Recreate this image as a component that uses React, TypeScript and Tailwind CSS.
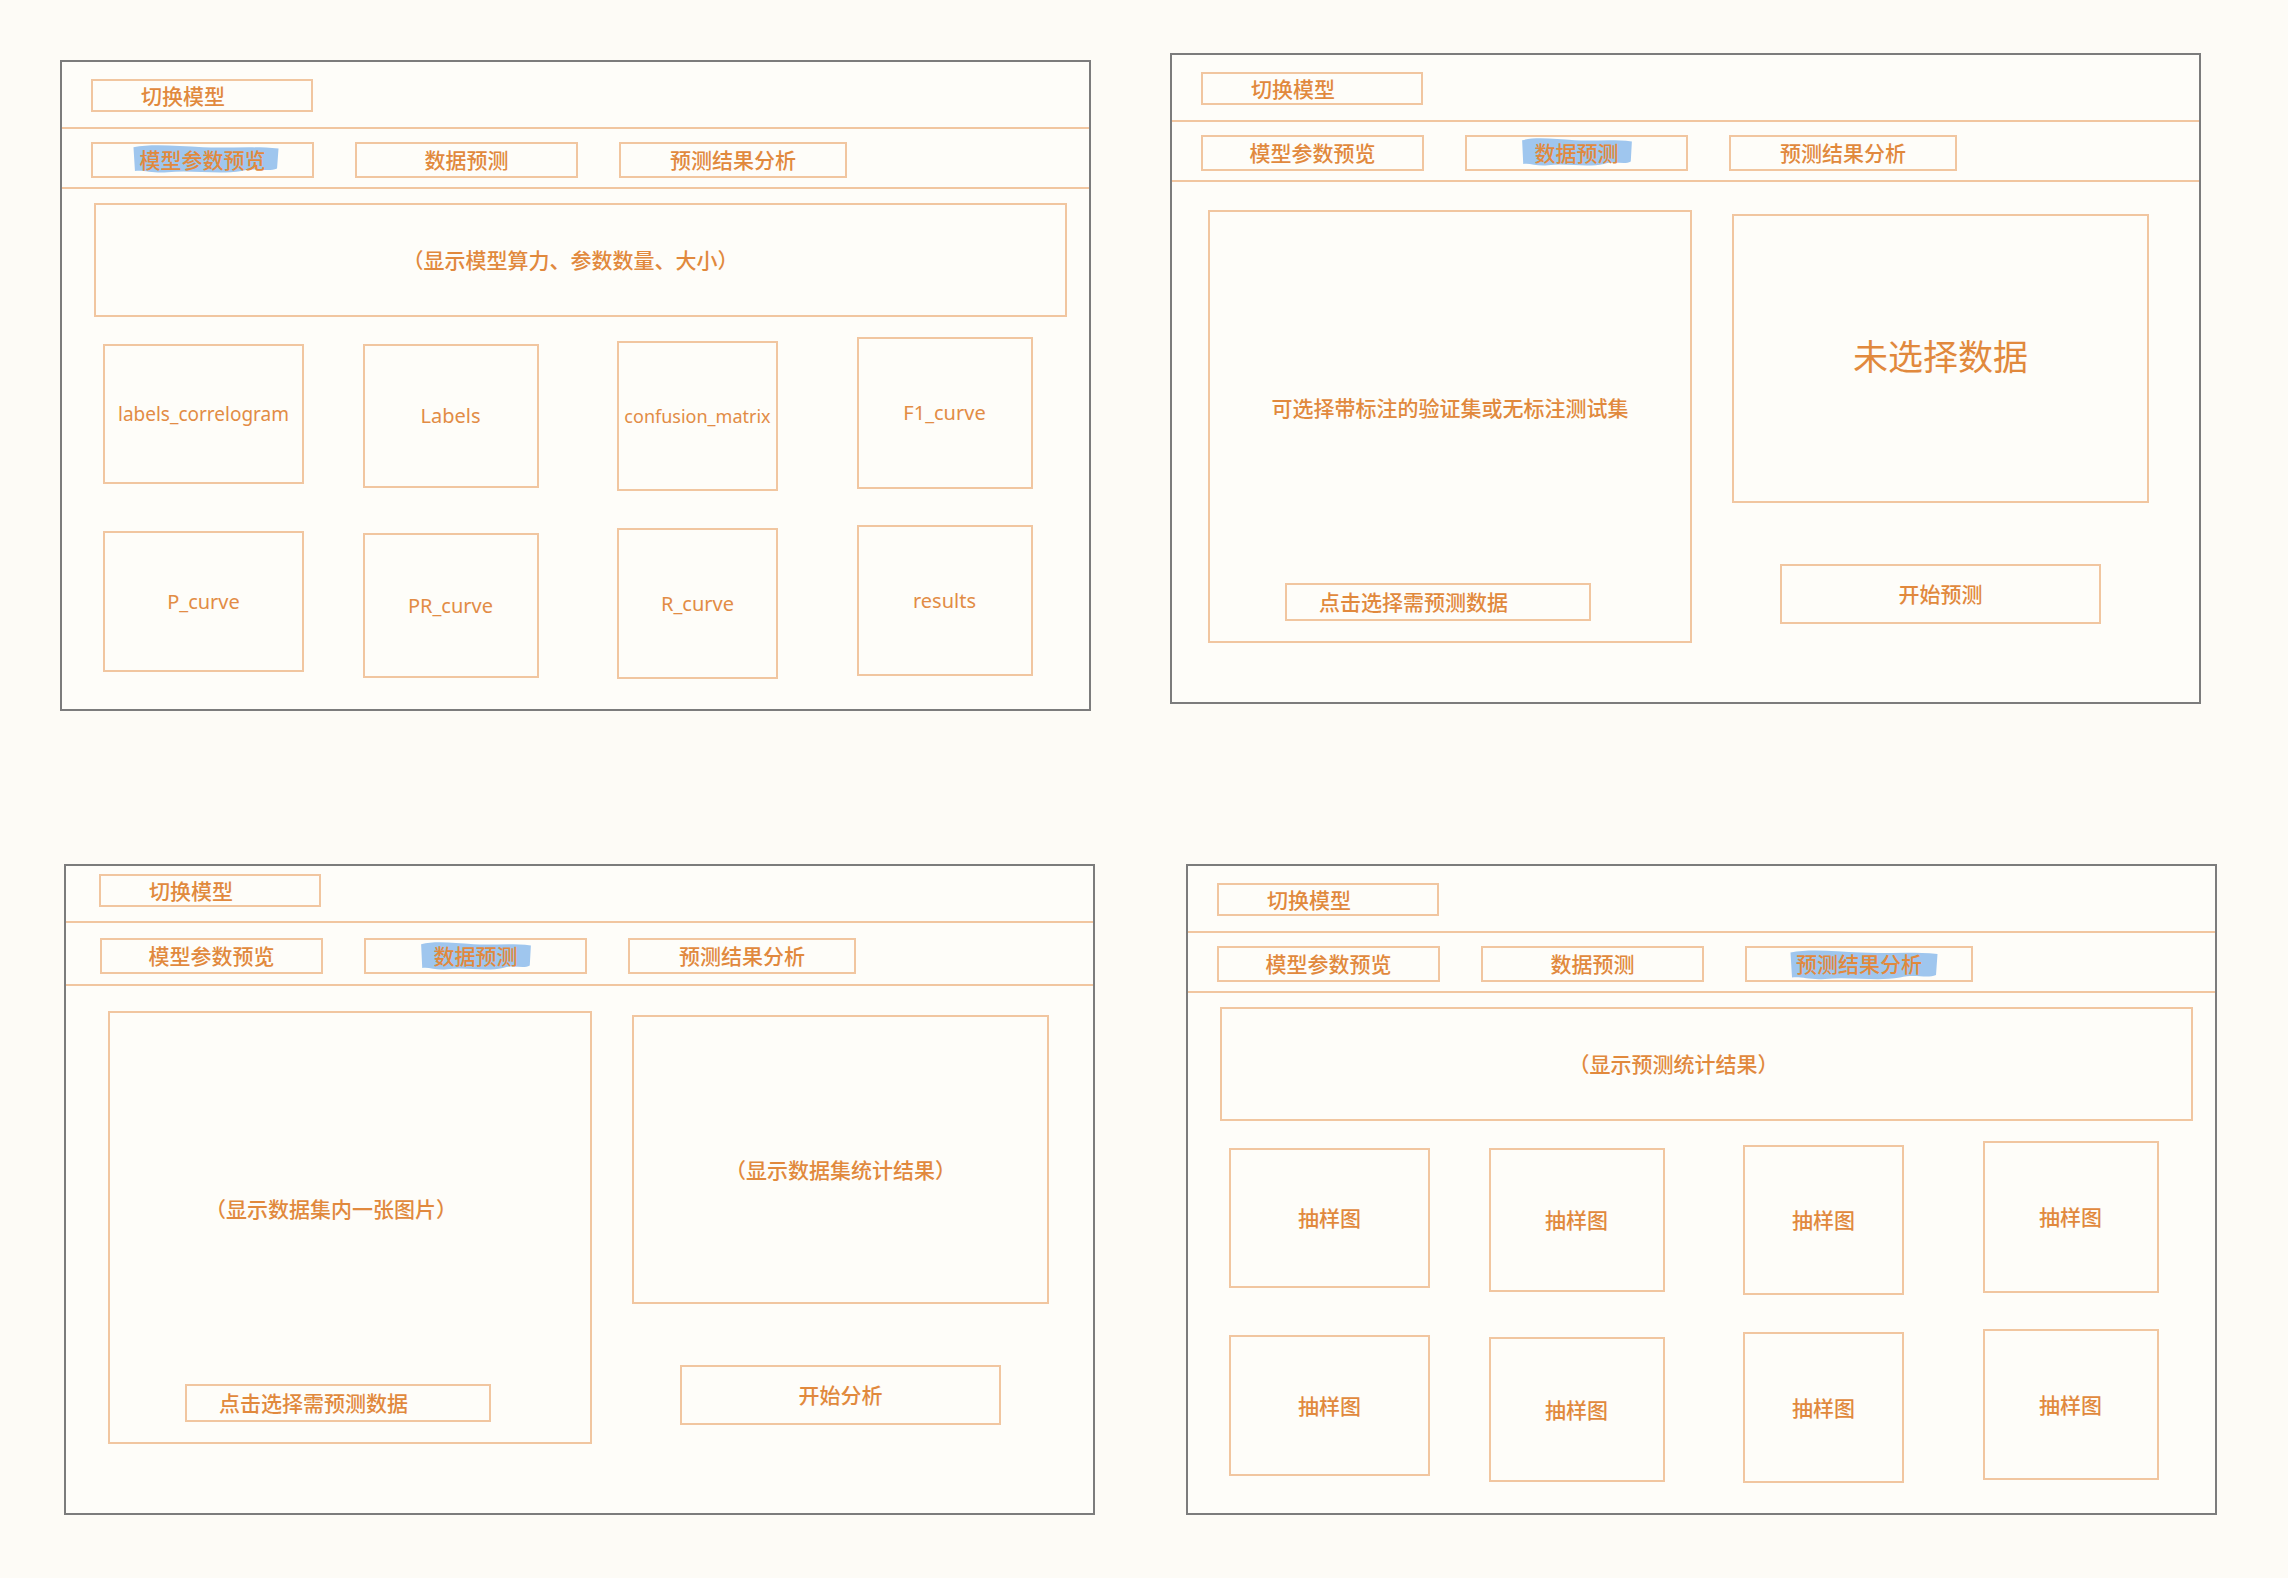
import React from 'react';

const CJK = "font-['Noto_Sans_CJK_SC',sans-serif]";
const LINE = 'border-2 border-[#f1c6a0]';
const INK = 'text-[#e1893d]';

type MarkProps = { children: React.ReactNode; svgClass: string };

// hand-drawn blue highlighter stroke behind the active tab label
const Mark: React.FC<MarkProps> = ({ children, svgClass }) => (
  <span className="relative inline-block">
    <svg
      className={`absolute ${svgClass}`}
      viewBox="0 0 100 30"
      preserveAspectRatio="none"
    >
      <path
        d="M1 5 C14 2 30 4 48 5 C64 6 80 4 99 6 L98 22 C92 25 84 21 74 24 C58 27 40 23 24 25 C14 26 8 23 2 24 Z"
        fill="#9fc6ee"
      />
    </svg>
    <span className="relative">{children}</span>
  </span>
);

const tabs = ['模型参数预览', '数据预测', '预测结果分析'];
const tabWidths = ['w-[223px]', 'w-[223px]', 'w-[228px]'];

type HeaderProps = { active: number; tight?: boolean; markClass: string };

const Header: React.FC<HeaderProps> = ({ active, tight, markClass }) => (
  <>
    <div className={tight ? 'pl-[33px] pt-[8px] pb-[14px]' : 'pl-[29px] pt-[17px] pb-[15px]'}>
      <div className={`w-[222px] h-[33px] ${LINE} flex items-center pl-[48px] text-[21px] font-medium ${INK}`}>
        切换模型
      </div>
    </div>
    <div className="h-[2px] bg-[#f1c6a0]" />
    <div className={`flex gap-[41px] ${tight ? 'pl-[34px] pt-[15px] pb-[10px]' : 'pl-[29px] pt-[13px] pb-[9px]'}`}>
      {tabs.map((t, i) => (
        <div
          key={t}
          className={`${tabWidths[i]} h-[36px] ${LINE} flex items-center justify-center text-[21px] font-medium ${INK}`}
        >
          {i === active ? <Mark svgClass={markClass}>{t}</Mark> : t}
        </div>
      ))}
    </div>
    <div className="h-[2px] bg-[#f1c6a0]" />
  </>
);

const Panel: React.FC<{ className?: string; children: React.ReactNode }> = ({ className, children }) => (
  <div className={`w-[1031px] h-[651px] border-2 border-[#7c7c7c] bg-[#fefdf9] flex flex-col ${className ?? ''}`}>
    {children}
  </div>
);

type Cell = { label: string; w: string; h: string; mt: string; en?: boolean; size?: string };

const CellBox: React.FC<{ c: Cell }> = ({ c }) => (
  <div className={`${c.w} ${c.h} ${c.mt} ${LINE} flex items-center justify-center ${INK}`}>
    <span
      className={
        c.en
          ? `font-['Noto_Sans',sans-serif] ${c.size ?? 'text-[20px]'} text-[#e28c45]`
          : `${CJK} text-[21px] font-medium`
      }
    >
      {c.label}
    </span>
  </div>
);

type GridProps = { top: string; topPad: string; row1: Cell[]; row2: Cell[] };

const GridArea: React.FC<GridProps> = ({ top, topPad, row1, row2 }) => (
  <>
    <div
      className={`ml-[32px] mt-[14px] w-[973px] h-[114px] ${LINE} flex items-center justify-center text-[21px] font-medium ${INK} ${topPad}`}
    >
      {top}
    </div>
    <div className="ml-[18px] w-[988px] grid grid-cols-4 justify-items-center items-start">
      {row1.map((c, i) => (
        <CellBox key={'a' + i} c={c} />
      ))}
      {row2.map((c, i) => (
        <CellBox key={'b' + i} c={c} />
      ))}
    </div>
  </>
);

const dims1 = [
  { w: 'w-[201px]', h: 'h-[140px]', mt: 'mt-[27px]' },
  { w: 'w-[176px]', h: 'h-[144px]', mt: 'mt-[27px]' },
  { w: 'w-[161px]', h: 'h-[150px]', mt: 'mt-[24px]' },
  { w: 'w-[176px]', h: 'h-[152px]', mt: 'mt-[20px]' },
];
const dims2 = [
  { w: 'w-[201px]', h: 'h-[141px]', mt: 'mt-[40px]' },
  { w: 'w-[176px]', h: 'h-[145px]', mt: 'mt-[42px]' },
  { w: 'w-[161px]', h: 'h-[151px]', mt: 'mt-[37px]' },
  { w: 'w-[176px]', h: 'h-[151px]', mt: 'mt-[34px]' },
];

const curves1: Cell[] = [
  { label: 'labels_correlogram', en: true, size: 'text-[19px]', ...dims1[0] },
  { label: 'Labels', en: true, ...dims1[1] },
  { label: 'confusion_matrix', en: true, size: 'text-[18px]', ...dims1[2] },
  { label: 'F1_curve', en: true, ...dims1[3] },
];
const curves2: Cell[] = [
  { label: 'P_curve', en: true, ...dims2[0] },
  { label: 'PR_curve', en: true, ...dims2[1] },
  { label: 'R_curve', en: true, ...dims2[2] },
  { label: 'results', en: true, ...dims2[3] },
];
const samples1: Cell[] = dims1.map((d) => ({ label: '抽样图', ...d }));
const samples2: Cell[] = dims2.map((d) => ({ label: '抽样图', ...d }));

type SplitProps = {
  leftText: string;
  leftPad: string;
  rightText: string;
  rightBig?: boolean;
  action: string;
  pad: string;
};

const SplitArea: React.FC<SplitProps> = ({ leftText, leftPad, rightText, rightBig, action, pad }) => (
  <div className={`flex items-start ${pad}`}>
    <div className={`w-[484px] h-[433px] ${LINE} flex flex-col`}>
      <div className={`flex-1 flex items-center justify-center pt-[20px] text-[21px] font-medium ${INK} ${leftPad}`}>
        {leftText}
      </div>
      <div className={`ml-[75px] mb-[20px] w-[306px] h-[38px] ${LINE} flex items-center pl-[32px] text-[21px] font-medium ${INK}`}>
        点击选择需预测数据
      </div>
    </div>
    <div className="ml-[40px] mt-[4px] w-[417px] flex flex-col items-center">
      <div
        className={`w-[417px] h-[289px] ${LINE} flex items-center justify-center ${INK} ${
          rightBig ? 'text-[35px] pb-[6px]' : 'text-[21px] font-medium pt-[20px]'
        }`}
      >
        {rightText}
      </div>
      <div className={`mt-[61px] w-[321px] h-[60px] ${LINE} flex items-center justify-center text-[21px] font-medium ${INK}`}>
        {action}
      </div>
    </div>
  </div>
);

const App: React.FC = () => (
  <div className={`w-[2288px] h-[1578px] bg-[#fdfbf6] pt-[53px] ${CJK}`}>
    <div className="flex items-start">
      <Panel className="ml-[60px] mt-[7px]">
        <Header active={0} markClass="left-[-8px] top-[-3px] w-[calc(100%+22px)] h-[calc(100%+6px)]" />
        <GridArea topPad="pr-[20px]" top="（显示模型算力、参数数量、大小）" row1={curves1} row2={curves2} />
      </Panel>
      <Panel className="ml-[79px]">
        <Header active={1} markClass="left-[-14px] top-[-3px] w-[calc(100%+28px)] h-[calc(100%+6px)]" />
        <SplitArea
          pad="ml-[36px] mt-[28px]"
          leftText="可选择带标注的验证集或无标注测试集"
          leftPad=""
          rightText="未选择数据"
          rightBig
          action="开始预测"
        />
      </Panel>
    </div>
    <div className="flex items-start mt-[153px]">
      <Panel className="ml-[64px]">
        <Header active={1} tight markClass="left-[-14px] top-[-2px] w-[calc(100%+28px)] h-[calc(100%+6px)]" />
        <SplitArea
          pad="ml-[42px] mt-[25px]"
          leftText="（显示数据集内一张图片）"
          leftPad="pr-[38px]"
          rightText="（显示数据集统计结果）"
          action="开始分析"
        />
      </Panel>
      <Panel className="ml-[91px]">
        <Header active={2} markClass="left-[-7px] top-[-2px] w-[calc(100%+24px)] h-[calc(100%+8px)]" />
        <GridArea topPad="pr-[66px]" top="（显示预测统计结果）" row1={samples1} row2={samples2} />
      </Panel>
    </div>
  </div>
);

export default App;
